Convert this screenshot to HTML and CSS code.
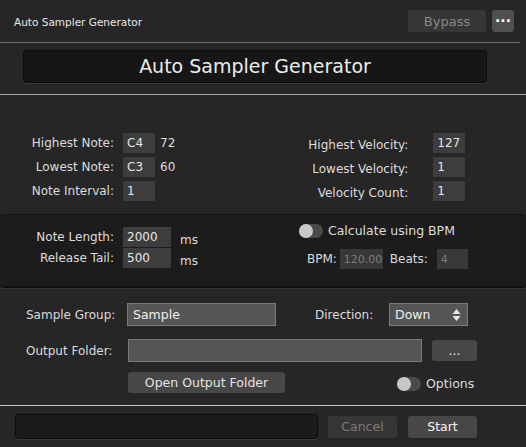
FILE: index.html
```html
<!DOCTYPE html>
<html lang="en">
<head>
    <meta charset="UTF-8">
    <title>Auto Sampler Generator</title>
    <link rel="stylesheet" href="styles.css">
</head>
<body>
    <div class="header">
        <div class="app-name">Auto Sampler Generator</div>
        <button class="bypass">Bypass</button>
        <button class="more">&middot;&middot;&middot;</button>
    </div>

    <div class="title-area">
        <div class="title-box">Auto Sampler Generator</div>
    </div>

    <div class="params">
        <div class="col left-col">
            <div class="row">
                <span class="lbl">Highest Note:</span>
                <span class="field">C4</span>
                <span class="after">72</span>
            </div>
            <div class="row">
                <span class="lbl">Lowest Note:</span>
                <span class="field">C3</span>
                <span class="after">60</span>
            </div>
            <div class="row">
                <span class="lbl">Note Interval:</span>
                <span class="field">1</span>
            </div>
        </div>
        <div class="col right-col">
            <div class="row">
                <span class="lbl">Highest Velocity:</span>
                <span class="field">127</span>
            </div>
            <div class="row">
                <span class="lbl">Lowest Velocity:</span>
                <span class="field">1</span>
            </div>
            <div class="row">
                <span class="lbl">Velocity Count:</span>
                <span class="field">1</span>
            </div>
        </div>
    </div>

    <div class="timing">
        <div class="col left-col">
            <div class="row tight">
                <span class="lbl">Note Length:</span>
                <span class="field wide">2000</span>
                <span class="unit">ms</span>
            </div>
            <div class="row tight">
                <span class="lbl">Release Tail:</span>
                <span class="field wide">500</span>
                <span class="unit">ms</span>
            </div>
        </div>
        <div class="col bpm-col">
            <div class="toggle-row">
                <span class="toggle"><span class="knob"></span></span>
                <span>Calculate using BPM</span>
            </div>
            <div class="bpm-row">
                <span class="small-lbl">BPM:</span>
                <span class="field dim bpm">120.00</span>
                <span class="small-lbl beats-lbl">Beats:</span>
                <span class="field dim beats">4</span>
            </div>
        </div>
    </div>

    <div class="output">
        <div class="out-row">
            <span class="out-lbl">Sample Group:</span>
            <span class="text-input group">Sample</span>
            <span class="dir-lbl">Direction:</span>
            <span class="text-input select">Down
                <svg width="9" height="14" viewBox="0 0 9 14">
                    <path d="M4.5 1 L8.5 6 H0.5 Z" fill="#e6e6e6"/>
                    <path d="M4.5 13 L8.5 8 H0.5 Z" fill="#e6e6e6"/>
                </svg>
            </span>
        </div>
        <div class="out-row folder-row">
            <span class="out-lbl">Output Folder:</span>
            <span class="text-input folder"></span>
            <button class="btn browse">...</button>
        </div>
        <div class="out-row last">
            <button class="btn open">Open Output Folder</button>
            <div class="toggle-row options">
                <span class="toggle"><span class="knob"></span></span>
                <span>Options</span>
            </div>
        </div>
    </div>

    <div class="footer">
        <div class="progress"></div>
        <button class="btn cancel">Cancel</button>
        <button class="btn start">Start</button>
    </div>
</body>
</html>
```

FILE: styles.css
```css
body {
    margin: 0;
    width: 526px;
    height: 447px;
    overflow: hidden;
    background-color: #262626;
    color: #dcdcdc;
    font-family: "DejaVu Sans", Verdana, sans-serif;
    font-size: 12px;
    white-space: nowrap;
}
button {
    font-family: inherit;
    border: none;
    padding: 0;
    cursor: pointer;
}
.header {
    display: flex;
    align-items: center;
    height: 42px;
    padding: 0 6px 0 14px;
    border-bottom: 1px solid #6a6a6a;
    margin-right: 6px;
}
.app-name {
    flex: 1;
    font-size: 10.5px;
    color: #e8e8e8;
    margin-top: 2px;
}
.bypass {
    width: 78px;
    height: 22px;
    border-radius: 3px;
    background-color: #363636;
    color: #8a8a8a;
    font-size: 13px;
}
.more {
    width: 22px;
    height: 22px;
    margin-left: 6px;
    border-radius: 3px;
    background-color: #505050;
    color: #fff;
    font-size: 14px;
    font-weight: bold;
    line-height: 22px;
}
.title-area {
    padding: 7px 0 11px 23px;
    border-bottom: 1px solid #a9a9a9;
}
.title-box {
    width: 462px;
    height: 31px;
    border: 1px solid #0c0c0c;
    border-radius: 3px;
    background-color: #161616;
    box-shadow: 0 1px 0 #3a3a3a;
    color: #ececec;
    font-size: 19px;
    line-height: 31px;
    text-align: center;
}
.params {
    display: flex;
    padding: 38px 0 9px;
}
.row {
    display: flex;
    align-items: center;
    height: 20px;
    margin-bottom: 4px;
}
.row.tight {
    margin-bottom: 1px;
}
.lbl {
    text-align: right;
}
.left-col .lbl {
    width: 114px;
    margin-right: 9px;
}
.right-col {
    margin-left: 111px;
}
.right-col .lbl {
    width: 122px;
    margin-right: 25px;
    margin-top: 4px;
}
.field {
    display: inline-block;
    box-sizing: border-box;
    width: 32px;
    height: 20px;
    padding: 0 4px;
    background-color: #3d3d3d;
    color: #e6e6e6;
    line-height: 21px;
}
.field.wide {
    width: 48px;
}
.field.dim {
    color: #7c7c7c;
    background-color: #383838;
    font-size: 11px;
}
.after {
    margin-left: 5px;
}
.unit {
    margin-left: 9px;
    margin-top: 5px;
}
.timing {
    display: flex;
    height: 74px;
    padding-top: 12px;
    box-sizing: border-box;
    background-color: #1c1c1c;
    border-top: 1px solid #121212;
    border-bottom: 2px solid #0f0f0f;
    border-radius: 4px;
}
.bpm-col {
    margin-left: 101px;
    margin-top: -4px;
}
.toggle-row {
    display: flex;
    align-items: center;
    font-size: 12.5px;
}
.toggle {
    position: relative;
    display: inline-block;
    width: 24px;
    height: 14px;
    margin-right: 5px;
    border-radius: 7px;
    background-color: #4a4a4a;
}
.knob {
    position: absolute;
    left: 0;
    top: 0;
    width: 14px;
    height: 14px;
    border-radius: 50%;
    background-color: #c8c8c8;
}
.bpm-row {
    display: flex;
    align-items: center;
    margin-top: 11px;
    margin-left: 8px;
}
.small-lbl {
    margin-right: 3px;
}
.beats-lbl {
    margin-left: 7px;
    margin-right: 9px;
}
.field.bpm {
    width: 43px;
}
.field.beats {
    width: 31px;
}
.output {
    padding: 14px 0 12px;
    border-top: 1px solid #353535;
    border-bottom: 1px solid #c6c4d6;
}
.out-row {
    display: flex;
    align-items: center;
    margin-bottom: 13px;
}
.out-row.folder-row {
    margin-bottom: 10px;
}
.out-row.last {
    margin-bottom: 0;
}
.out-lbl {
    box-sizing: border-box;
    width: 127px;
    padding-left: 26px;
}
.text-input {
    box-sizing: border-box;
    display: inline-flex;
    align-items: center;
    justify-content: space-between;
    height: 23px;
    padding: 0 6px 0 5px;
    background-color: #555;
    border: 1px solid #7a7a7a;
    color: #f0f0f0;
    font-size: 12.5px;
}
.text-input.group {
    width: 149px;
}
.dir-lbl {
    margin-left: 39px;
    width: 74px;
}
.text-input.select {
    width: 79px;
}
.text-input.folder {
    width: 294px;
    margin-left: 1px;
}
.btn {
    height: 21px;
    border-radius: 3px;
    background-color: #474747;
    color: #e4e4e4;
    font-size: 12.5px;
}
.browse {
    width: 45px;
    margin-left: 10px;
}
.open {
    width: 157px;
    margin-left: 128px;
}
.options {
    margin-left: 112px;
    margin-top: 2px;
}
.footer {
    display: flex;
    align-items: center;
    padding: 8px 0 0 15px;
}
.progress {
    width: 301px;
    height: 23px;
    border: 1px solid #0c0c0c;
    border-radius: 3px;
    background-color: #1b1b1b;
    box-shadow: 0 1px 0 #3a3a3a;
}
.cancel {
    width: 69px;
    height: 22px;
    margin-left: 10px;
    background-color: #363636;
    color: #7a7a7a;
}
.start {
    width: 69px;
    height: 22px;
    margin-left: 11px;
    background-color: #474747;
    color: #f4f4f4;
}
```
